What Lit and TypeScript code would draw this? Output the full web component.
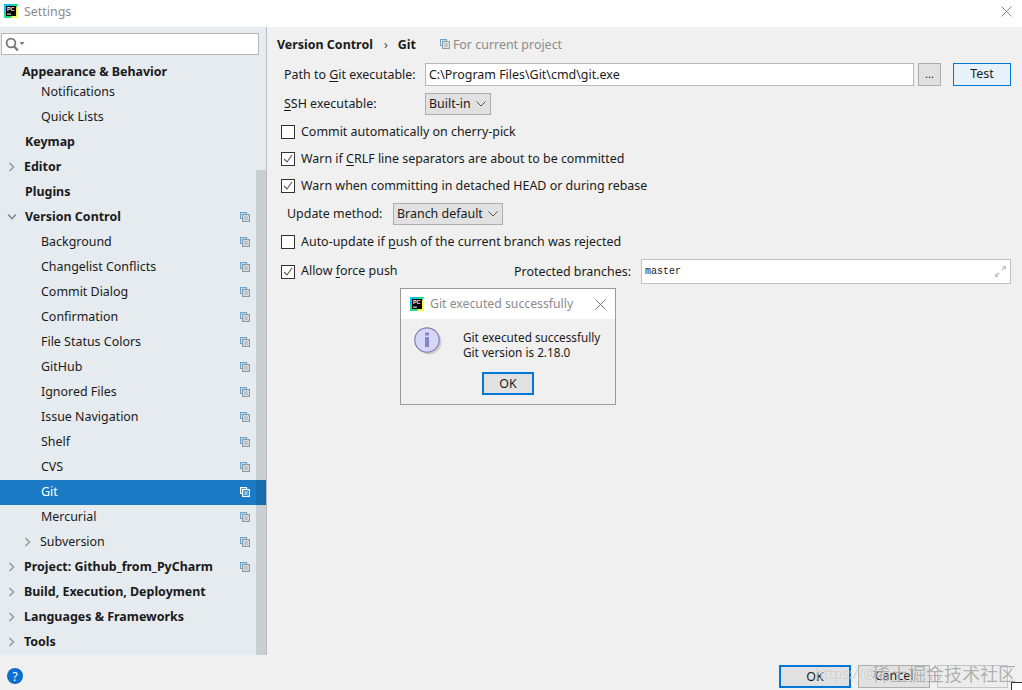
import { LitElement, html, css } from "lit";
import { customElement } from "lit/decorators.js";

const copyIcon = () => html`<svg class="copy" width="10" height="10" viewBox="0 0 10 10" fill="none"><path class="b" d="M2 6.5H.6V.6h5.9V2" stroke-width="1.2"/><rect class="f" x="2.6" y="2.6" width="6.8" height="6.8" stroke-width="1.2"/><path class="f" d="M4.2 5h3.6M4.2 7h3.6" stroke-width="1"/></svg>`;

const copyIcon2 = html`<svg width="10" height="10" viewBox="0 0 10 10" fill="none"><path d="M2 6.5H.6V.6h5.9V2" stroke="#6aa5d0" stroke-width="1.1"/><rect x="2.6" y="2.6" width="6.8" height="6.8" stroke="#8d9aa3" stroke-width="1.1"/><path d="M4.2 5h3.6M4.2 7h3.6" stroke="#8d9aa3"/></svg>`;

const pcLogo = (s: number) => html`<svg width="${s}" height="${s}" viewBox="0 0 14 14"><rect width="14" height="14" fill="#21d789"/><path d="M14 0v14H7z" fill="#fcf84a"/><path d="M0 0h9L0 9z" fill="#07c3f2"/><rect x="2" y="2" width="10" height="10" fill="#000"/><text x="3" y="7" font-size="5.4" font-weight="700" fill="#fff" font-family="Liberation Sans, sans-serif">PC</text><rect x="3" y="9.6" width="4" height="1" fill="#fff"/></svg>`;

const chevron = html`<svg class="chev" width="7" height="10" viewBox="0 0 7 10" fill="none" stroke="#9a9a9a" stroke-width="1.6"><path d="M1.5 1l4 4-4 4"/></svg>`;
const chevronIn = html`<svg class="chev in" width="7" height="10" viewBox="0 0 7 10" fill="none" stroke="#9a9a9a" stroke-width="1.6"><path d="M1.5 1l4 4-4 4"/></svg>`;
const chevronDown = html`<svg class="chev open" width="10" height="7" viewBox="0 0 10 7" fill="none" stroke="#8a8a8a" stroke-width="1.6"><path d="M1 1.5l4 4 4-4"/></svg>`;

const down = html`<svg class="down" width="10" height="6" viewBox="0 0 10 6" fill="none" stroke="#555" stroke-width="1"><path d="M.5.5L5 5 9.5.5"/></svg>`;

const check = html`<svg width="12" height="12" viewBox="0 0 12 12" fill="none" stroke="#555" stroke-width="1.1"><path d="M2 6l3 3 5-7"/></svg>`;

type Row = { t: string; k: "top" | "sub"; chev?: "r" | "d" | "in"; copy?: boolean; sel?: boolean; x?: number };

const rows: Row[] = [
  { t: "Notifications", k: "sub" },
  { t: "Quick Lists", k: "sub" },
  { t: "Keymap", k: "top", x: 25 },
  { t: "Editor", k: "top", chev: "r" },
  { t: "Plugins", k: "top", x: 25 },
  { t: "Version Control", k: "top", chev: "d", copy: true, x: 25 },
  { t: "Background", k: "sub", copy: true },
  { t: "Changelist Conflicts", k: "sub", copy: true },
  { t: "Commit Dialog", k: "sub", copy: true },
  { t: "Confirmation", k: "sub", copy: true },
  { t: "File Status Colors", k: "sub", copy: true },
  { t: "GitHub", k: "sub", copy: true },
  { t: "Ignored Files", k: "sub", copy: true },
  { t: "Issue Navigation", k: "sub", copy: true },
  { t: "Shelf", k: "sub", copy: true },
  { t: "CVS", k: "sub", copy: true },
  { t: "Git", k: "sub", copy: true, sel: true },
  { t: "Mercurial", k: "sub", copy: true },
  { t: "Subversion", k: "sub", copy: true, chev: "in", x: 40 },
  { t: "Project: Github_from_PyCharm", k: "top", chev: "r", copy: true },
  { t: "Build, Execution, Deployment", k: "top", chev: "r" },
  { t: "Languages & Frameworks", k: "top", chev: "r" },
  { t: "Tools", k: "top", chev: "r" },
];

@customElement("app-root")
export class AppRoot extends LitElement {
  static styles = css`
    :host { display: block; width: 1022px; height: 690px; position: relative; overflow: hidden; background: #f0f0f0; font-family: "Noto Sans", "Open Sans", sans-serif; font-size: 12.45px; color: #1a1a1a; }
    * { box-sizing: border-box; }
    u { text-underline-offset: 2px; text-decoration-thickness: 1px; }
    .title { height: 27px; background: #fff; display: flex; align-items: center; padding: 0 10px 5px 4px; gap: 6px; color: #8c8c8c; }
    .title .sp { flex: 1; }
    .body { display: flex; height: 628px; }
    .side { width: 267px; background: #e6ebf0; border-right: 1px solid #b9bdc1; position: relative; flex: none; }
    .search { height: 33px; padding: 6px 7px 0 1px; }
    .search div { height: 22px; width: 258px; background: #fff; border: 1px solid #b8b8b8; display: flex; align-items: center; padding-left: 3px; }
    .r { height: 25px; display: flex; align-items: center; position: relative; white-space: nowrap; padding-bottom: 3px; }
    .r.head { height: 20px; padding-left: 22px; font-weight: 700; align-items: flex-start; padding-top: 2px; padding-bottom: 0; line-height: 20px; }
    .r.top { font-weight: 700; }
    .r.sel { background: #1a7bc4; color: #fff; }
    .chev { position: absolute; left: 8px; top: 7px; }
    .chev.in { left: 24px; }
    .chev.open { left: 7px; top: 8px; }
    .copy { position: absolute; left: 240px; top: 7px; }
    .copy .b { stroke: #6aa5d0; }
    .copy .f { stroke: #8d9aa3; }
    .r.sel .copy .b, .r.sel .copy .f { stroke: #fff; }
    .thumb { position: absolute; left: 256px; width: 10px; top: 143px; bottom: 0; background: rgba(0, 0, 0, 0.12); }
    .main { flex: 1; padding: 0 11px 0 10px; position: relative; }
    .crumb { height: 34px; margin-bottom: 2px; display: flex; align-items: center; font-weight: 700; }
    .crumb .sep { font-weight: 400; margin: 0 10px 0 11px; color: #444; }
    .crumb .proj { display: flex; align-items: center; gap: 3px; font-weight: 400; color: #8c8c8c; margin-left: 24px; }
    .line { display: flex; align-items: center; }
    .lbl { white-space: nowrap; margin-bottom: 2px; }
    .p1 { height: 23px; padding-left: 7px; }
    .p1 .lbl { width: 141px; margin-bottom: 0; }
    .field { height: 23px; background: #fff; border: 1px solid #b8b8b8; display: flex; align-items: center; padding: 0 0 1px 3px; }
    .p1 .field { width: 489px; }
    .dots { width: 23px; height: 23px; margin-left: 4px; background: #e1e1e1; border: 1px solid #adadad; display: flex; justify-content: center; align-items: center; font-size: 11px; padding-bottom: 3px; }
    .test { width: 58px; height: 23px; margin-left: 12px; background: #e5f1fb; border: 1px solid #0078d7; display: flex; justify-content: center; align-items: center; padding-bottom: 2px; }
    .p2 { height: 22px; padding-left: 7px; margin-top: 7px; }
    .p2 .lbl { width: 141px; }
    .sel-b { height: 22px; background: #e1e1e1; border: 1px solid #adadad; display: flex; align-items: center; padding: 0 4px 1px 3px; justify-content: space-between; }
    .cb { height: 27px; gap: 6px; padding-left: 4px; }
    .cb > span:last-child { margin-bottom: 1px; }
    .box { width: 14px; height: 14px; border: 1px solid #333; background: #fff; display: flex; align-items: center; justify-content: center; flex: none; }
    .cbs { margin-top: 3px; }
    .um { height: 22px; padding-left: 10px; margin-top: 4px; }
    .um .lbl { width: 106px; }
    .au { margin-top: 3px; }
    .afp { position: relative; height: 25px; margin-top: 4px; padding-left: 4px; justify-content: space-between; }
    .afp .l { display: flex; align-items: center; gap: 6px; }
    .afp .l .t { margin-bottom: 3px; }
    .afp .r2 { display: flex; align-items: center; }
    .afp .r2 .lbl { margin-right: 10px; margin-bottom: 0; }
    .m { width: 370px; height: 25px; background: #fff; border: 1px solid #c0c0c0; padding: 0 3px; display: flex; align-items: center; justify-content: space-between; font-family: "Liberation Mono", monospace; font-size: 10px; }
    .foot { height: 35px; position: relative; display: flex; align-items: flex-start; padding: 10px 14px 0 7px; }
    .help { width: 16px; height: 16px; border-radius: 50%; background: #0e6ed0; color: #fff; font-size: 12px; display: flex; align-items: center; justify-content: center; margin-top: 3px; }
    .foot .sp { flex: 1; }
    .btn { width: 72px; height: 23px; background: #e1e1e1; border: 1px solid #adadad; display: flex; align-items: center; justify-content: center; margin-left: 7px; padding-bottom: 2px; }
    .btn.def { border: 2px solid #0078d7; padding-bottom: 1px; }
    .btn.off { width: 71px; background: #ececec; border-color: #c4c4c4; }
    .wm { position: absolute; left: 815px; top: 660px; height: 26px; display: flex; align-items: center; color: rgba(100, 100, 100, 0.5); white-space: nowrap; font-family: "Noto Sans", "Noto Sans CJK SC", sans-serif; text-shadow: 0 0 1px rgba(255, 255, 255, 0.8); }
    .wm .a { font-size: 14px; width: 57px; color: rgba(180, 180, 180, 0.6); }
    .wm .b { font-size: 18px; }
    .dlg { position: absolute; left: 400px; top: 288px; width: 216px; height: 117px; border: 1px solid #9a9a9a; background: #f0f0f0; }
    .dt { height: 30px; background: #fff; display: flex; align-items: center; padding: 0 9px; gap: 6px; color: #8c8c8c; font-size: 12.25px; }
    .dt .tx { margin-bottom: 2px; }
    .dt .sp { flex: 1; }
    .db { display: flex; padding: 8px 0 0 13px; }
    .msg { margin-left: 21px; margin-top: 3px; line-height: 15px; font-size: 11.75px; }
    .dok { width: 52px; height: 23px; margin: 12px 0 0 81px; background: #e1e1e1; border: 2px solid #0078d7; display: flex; align-items: center; justify-content: center; padding-bottom: 1px; }
    .corner { position: absolute; left: 1011px; top: 682px; width: 11px; height: 8px; background: #fff; border: 1px solid #333; border-right: 0; border-bottom: 0; }
  `;

  private row(r: Row) {
    const x = r.x ?? (r.k === "sub" ? 41 : 24);
    const ch = r.chev === "r" ? chevron : r.chev === "d" ? chevronDown : r.chev === "in" ? chevronIn : "";
    return html`<div class="r ${r.k} ${r.sel ? "sel" : ""}" style="padding-left:${x}px">${ch}${r.t}${r.copy ? copyIcon() : ""}</div>`;
  }

  render() {
    return html`
      <div class="title">${pcLogo(14)}<span>Settings</span><span class="sp"></span>
        <svg width="11" height="11" viewBox="0 0 11 11" stroke="#888" stroke-width="1"><path d="M.5.5l10 10M10.5.5l-10 10"/></svg></div>
      <div class="body">
        <div class="side">
          <div class="search"><div>
            <svg width="20" height="15" viewBox="0 0 20 15" fill="none"><circle cx="6" cy="6" r="4.4" stroke="#777" stroke-width="1.8"/><path d="M9.2 9.4l3.6 4" stroke="#777" stroke-width="2.2"/><path d="M14.5 5h5l-2.5 3z" fill="#777"/></svg>
          </div></div>
          <div class="r head">Appearance &amp; Behavior</div>
          ${rows.map((r) => this.row(r))}
          <div class="thumb"></div>
        </div>
        <div class="main">
          <div class="crumb"><span>Version Control</span><span class="sep">›</span><span>Git</span>
            <span class="proj">${copyIcon2}For current project</span></div>
          <div class="line p1"><span class="lbl">Path to <u>G</u>it executable:</span><div class="field">C:\\Program Files\\Git\\cmd\\git.exe</div><div class="dots">...</div><div class="test">Test</div></div>
          <div class="line p2"><span class="lbl"><u>S</u>SH executable:</span><div class="sel-b" style="width:66px">Built-in ${down}</div></div>
          <div class="cbs">
            <div class="line cb"><span class="box"></span><span>Commit automatically on cherry-pick</span></div>
            <div class="line cb"><span class="box">${check}</span><span>Warn if <u>C</u>RLF line separators are about to be committed</span></div>
            <div class="line cb"><span class="box">${check}</span><span>Warn when committing in detached HEAD or during rebase</span></div>
          </div>
          <div class="line um"><span class="lbl">Update method:</span><div class="sel-b" style="width:110px">Branch default ${down}</div></div>
          <div class="line cb au"><span class="box"></span><span>Auto-update if <u>p</u>ush of the current branch was rejected</span></div>
          <div class="line afp">
            <span class="l"><span class="box">${check}</span><span class="t">Allow <u>f</u>orce push</span></span>
            <span class="r2"><span class="lbl">Protected branches:</span>
              <div class="m">master <svg width="13" height="13" viewBox="0 0 13 13" fill="#c4c4c4"><path d="M8 1h4v4l-1.4-1.4-2.2 2.2-1-1 2.2-2.2zM1 12V8l1.4 1.4 2.2-2.2 1 1-2.2 2.2L5 12z"/></svg></div></span>
          </div>
        </div>
      </div>
      <div class="foot">
        <div class="help">?</div><span class="sp"></span>
        <div class="btn def">OK</div><div class="btn">Cancel</div><div class="btn off"></div>
      </div>
      <div class="dlg">
        <div class="dt">${pcLogo(14)}<span class="tx">Git executed successfully</span><span class="sp"></span>
          <svg width="11" height="11" viewBox="0 0 11 11" stroke="#777"><path d="M.5.5l10 10M10.5.5l-10 10"/></svg></div>
        <div class="db">
          <svg width="28" height="30" viewBox="0 0 28 30"><circle cx="15" cy="15" r="12.5" fill="#000" opacity=".14"/><circle cx="13" cy="13" r="12.2" fill="#d6d6f6" stroke="#7f7fb5" stroke-width="1.2"/><rect x="11" y="10" width="4" height="10" fill="#8484cf"/><rect x="11" y="5.5" width="4" height="3" fill="#8484cf"/></svg>
          <div class="msg">Git executed successfully<br />Git version is 2.18.0</div>
        </div>
        <div class="dok">OK</div>
      </div>
      <div class="wm"><span class="a">https://@</span><span class="b">稀土掘金技术社区</span></div>
      <div class="corner"></div>
    `;
  }
}
